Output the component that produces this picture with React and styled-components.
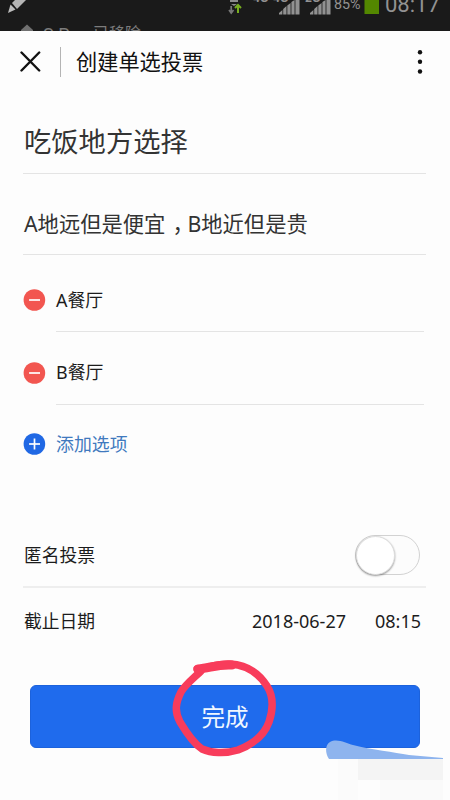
import { useState } from "react";
import styled, { createGlobalStyle } from "styled-components";

const GlobalStyle = createGlobalStyle`
  * {
    box-sizing: border-box;
  }
  body {
    margin: 0;
    background-color: #fdfdfd;
    font-family: "Noto Sans", "Noto Sans CJK SC", sans-serif;
  }
`;

const Page = styled.div`
  position: relative;
  width: 450px;
  height: 800px;
  overflow: hidden;
  background-color: #fdfdfd;
  color: #1c1c1c;
`;

const StatusBar = styled.div`
  position: relative;
  height: 31px;
  overflow: hidden;
  background-color: #1a1a1a;
`;

const StatusIcons = styled.svg`
  display: block;
`;

const StatusText = styled.span`
  position: absolute;
  left: ${(props) => props.$left}px;
  top: ${(props) => props.$top}px;
  color: ${(props) => props.$color || "#929292"};
  font-family: Roboto, "Noto Sans CJK SC", sans-serif;
  font-size: ${(props) => props.$size}px;
  font-weight: ${(props) => props.$weight || 400};
  line-height: 1;
  white-space: nowrap;
`;

const Header = styled.header`
  display: flex;
  align-items: center;
  height: 61px;
  padding: 0 24px 0 20px;
`;

const Divider = styled.div`
  width: 1px;
  height: 30px;
  margin: 0 15px 0 19px;
  background-color: #b4b4b4;
`;

const HeaderTitle = styled.h1`
  flex: 1;
  margin: 0;
  font-size: 21.2px;
  font-weight: 400;
  line-height: 30px;
  color: #111;
`;

const Icon = styled.svg`
  display: block;
  flex-shrink: 0;
`;

const Field = styled.div`
  display: flex;
  align-items: center;
  height: ${(props) => props.$height}px;
  margin: 0 24px 0 23px;
  padding: ${(props) => props.$offset}px 0 0 1px;
  border-bottom: 1px solid #e4e4e4;
  color: #333;
  font-size: ${(props) => props.$size}px;
  line-height: 40px;
  white-space: nowrap;
`;

/* half-width comma, centred in a full-width cell */
const Comma = styled.span`
  display: inline-block;
  width: 22px;
  padding-left: 7px;
  font-family: "Noto Sans CJK SC", sans-serif;
  font-feature-settings: "halt";
  line-height: 1;
`;

const Option = styled.div`
  display: flex;
  height: ${(props) => props.$height}px;
  margin: 0 26px 0 23px;
`;

const OptionIcon = styled.div`
  display: flex;
  align-items: flex-end;
  width: 33px;
  padding-bottom: 21px;
`;

const OptionText = styled.div`
  flex: 1;
  display: flex;
  align-items: flex-end;
  padding-bottom: ${(props) => props.$bottom || 16}px;
  border-bottom: 1px solid ${(props) => (props.$plain ? "transparent" : "#e4e4e4")};
  color: ${(props) => (props.$plain ? "#4079be" : "#1c1c1c")};
  font-size: 17.9px;
  line-height: 30px;
`;

const Setting = styled.div`
  display: flex;
  align-items: center;
  height: ${(props) => props.$height}px;
  margin: 0 24px 0 23px;
  padding: 0 5px 0 1px;
  border-bottom: ${(props) => (props.$line ? "2px solid #eeeeee" : "none")};
  font-size: 17.8px;
  line-height: 30px;
`;

const Label = styled.div`
  flex: 1;
  padding-top: ${(props) => props.$offset || 0}px;
`;

const DateText = styled.div`
  margin-right: 29px;
  font-size: 18px;
`;

const TimeText = styled.div`
  font-size: 18px;
`;

const Switch = styled.button`
  width: 65px;
  height: 40px;
  margin: 2px 1px 0 0;
  padding: 0;
  border: 1px solid #d2d2d2;
  border-radius: 20px;
  background-color: #fcfcfc;
`;

const Knob = styled.span`
  display: block;
  width: 39px;
  height: 39px;
  margin-left: ${(props) => (props.$on ? 24 : 0)}px;
  border: 1px solid #dedede;
  border-radius: 50%;
  background-color: #fff;
  box-shadow: 0 1px 2px rgba(0, 0, 0, 0.4);
`;

const Spacer = styled.div`
  height: ${(props) => props.$height}px;
`;

const Submit = styled.button`
  display: block;
  width: 390px;
  height: 63px;
  margin: 0 0 0 30px;
  padding: 0;
  border: 1px solid #1c62dc;
  border-radius: 6px;
  background-color: #1f6bed;
  color: #f0f8ff;
  font-family: inherit;
  font-size: 23.5px;
  line-height: 32px;
`;

const Marks = styled.svg`
  position: absolute;
  left: 0;
  top: 650px;
  pointer-events: none;
`;

const CloseIcon = () => (
  <Icon width="21" height="21" viewBox="0 0 21 21">
    <path d="M1.5 1.5 19.2 19.5M19.2 1.5 1.5 19.5" stroke="#111" strokeWidth="2.4" strokeLinecap="round" />
  </Icon>
);

const MoreIcon = () => (
  <Icon width="12" height="30" viewBox="0 0 12 30">
    <circle cx="6" cy="5.2" r="2.2" fill="#111" />
    <circle cx="6" cy="14.8" r="2.2" fill="#111" />
    <circle cx="6" cy="24.5" r="2.2" fill="#111" />
  </Icon>
);

const RoundIcon = ({ plus }) => (
  <Icon width="23" height="22" viewBox="0 0 23 22">
    <circle cx="11.4" cy="11" r="10.8" fill={plus ? "#2068e4" : "#f25650"} />
    <path d="M6.1 11H17" stroke="#fff" strokeWidth="1.7" />
    {plus && <path d="M11.5 5.5V16.5" stroke="#fff" strokeWidth="1.7" />}
  </Icon>
);

const Status = () => (
  <StatusBar>
    <StatusIcons width="450" height="31" viewBox="0 0 450 31">
      {/* pencil */}
      <path d="M8 13 10.5 4.5 15.5 9.5Z" fill="#bdbdbd" />
      <path d="M12 3 17 -2H26V0L17 9Z" fill="#b5b5b5" />
      {/* notification behind the sheet */}
      <path d="M27 24.5 33 30V31H21V30Z" fill="#707070" />
      {/* data arrows */}
      <path d="M230 0H238V2H230ZM231 4H237L234 6Z" fill="#8b8b8b" />
      <path d="M231.2 6V12M229 10 231.2 13 233.5 10" stroke="#777" strokeWidth="1.7" fill="none" />
      <path d="M238 13V6M235 8 238 5 241 8" stroke="#78ae20" strokeWidth="2" fill="none" />
      {/* signal bars */}
      <path d="M279 14.5V13L282.4 10V14.5ZM283.2 14.5V9L286.5 6V14.5ZM287.3 14.5V5.5L290.6 3V14.5ZM291.4 14.5V2L294.6 0V14.5ZM295.4 14.5V0H299.5V14.5Z" fill="#919191" />
      <path d="M310 14.5V13L313.4 10V14.5ZM314.2 14.5V9L317.5 6V14.5ZM318.3 14.5V5.5L321.6 3V14.5ZM322.4 14.5V2L325.6 0V14.5ZM326.4 14.5V0H330.5V14.5Z" fill="#919191" />
      {/* battery */}
      <rect x="364.5" y="0" width="14.5" height="14" fill="#538700" />
    </StatusIcons>
    <StatusText $left={43} $top={26} $size={18} $color="#7c7c7c">S Pen</StatusText>
    <StatusText $left={93} $top={26} $size={16} $color="#7c7c7c">已移除</StatusText>
    <StatusText $left={253} $top={-8} $size={12} $weight={700}>4G</StatusText>
    <StatusText $left={273} $top={-8} $size={12} $weight={700}>4G</StatusText>
    <StatusText $left={305} $top={-8} $size={12} $weight={700}>2G</StatusText>
    <StatusText $left={334} $top={-3} $size={14.3}>85%</StatusText>
    <StatusText $left={385} $top={-6} $size={22}>08:17</StatusText>
  </StatusBar>
);

const App = () => {
  const [anonymous, setAnonymous] = useState(false);

  return (
    <Page>
      <GlobalStyle />
      <Status />
      <Header>
        <CloseIcon />
        <Divider />
        <HeaderTitle>创建单选投票</HeaderTitle>
        <MoreIcon />
      </Header>
      <Field $height={82} $offset={18} $size={27.3}>吃饭地方选择</Field>
      <Field $height={81} $offset={19} $size={21.3}>
        <span>
          A地远但是便宜<Comma>，</Comma>B地近但是贵
        </span>
      </Field>
      <Option $height={77}>
        <OptionIcon><RoundIcon /></OptionIcon>
        <OptionText>A餐厅</OptionText>
      </Option>
      <Option $height={73}>
        <OptionIcon><RoundIcon /></OptionIcon>
        <OptionText $bottom={17}>B餐厅</OptionText>
      </Option>
      <Option $height={71}>
        <OptionIcon><RoundIcon plus /></OptionIcon>
        <OptionText $plain>添加选项</OptionText>
      </Option>
      <Spacer $height={46} />
      <Setting $height={66} $line>
        <Label $offset={2}>匿名投票</Label>
        <Switch onClick={() => setAnonymous(!anonymous)}>
          <Knob $on={anonymous} />
        </Switch>
      </Setting>
      <Setting $height={66}>
        <Label>截止日期</Label>
        <DateText>2018-06-27</DateText>
        <TimeText>08:15</TimeText>
      </Setting>
      <Spacer $height={31} />
      <Submit>完成</Submit>
      <Marks width="450" height="150" viewBox="0 650 450 150">
        {/* brushed smear and pale blocks in the corner */}
        <path d="M329 759C325 753 325 745 330 742C337 738 346 743 353 745C372 750 394 752 409 755L443 758V759Z" fill="#8eb4ee" />
        <path d="M358 759H443V780H358Z" fill="#f4f4f4" />
        <path d="M338 759H358V800H338Z" fill="#fbfbfb" />
        <path d="M380 780H443V800H380Z" fill="#fafafa" />
        {/* hand drawn ring */}
        <path
          d="M197 669C208 669 216 663 230 664C249 665 260 675 267 686C274 697 273 710 269 722C264 736 251 745 238 750C225 754 211 753 202 749C193 743 186 732 180 722C174 711 176 702 181 692C186 684 194 678 201 671"
          fill="none"
          stroke="#f83c5b"
          strokeWidth="7.5"
          strokeLinecap="round"
          strokeLinejoin="round"
        />
        <path d="M198 669C210 668 218 664 232 665" fill="none" stroke="#f83c5b" strokeWidth="9" strokeLinecap="round" />
      </Marks>
    </Page>
  );
};

export default App;
